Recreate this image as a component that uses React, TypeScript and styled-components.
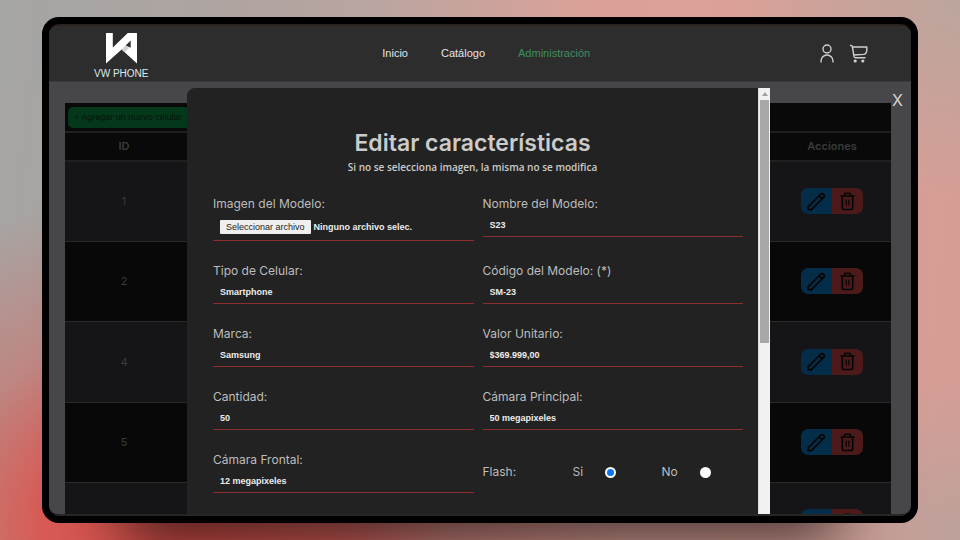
import React, { useState } from "react";
import styled, { createGlobalStyle } from "styled-components";

const geometric = `Inter, "Open Sans", sans-serif`;
const plain = `"Liberation Sans", Arial, sans-serif`;

const GlobalStyle = createGlobalStyle`
  *, *::before, *::after { box-sizing: border-box; }
  body { margin: 0; font-family: ${geometric}; }
  button, input { font: inherit; }
`;

const Backdrop = styled.div`
  display: flex;
  height: 100vh;
  padding: 17px 42px;
  overflow: hidden;
  background:
    radial-gradient(ellipse 440px 340px at 20% 98%, #dc4a44 0%, rgba(220, 84, 78, 0.9) 35%, rgba(212, 104, 98, 0.5) 60%, rgba(205, 140, 134, 0) 100%),
    radial-gradient(ellipse 240px 200px at 100% 0%, rgba(184, 166, 158, 0.9), rgba(200, 163, 155, 0) 100%),
    radial-gradient(ellipse 180px 160px at 100% 100%, rgba(186, 162, 156, 0.9), rgba(200, 163, 155, 0) 100%),
    linear-gradient(96deg, #a5a5a3 0%, #ada4a1 20%, #bba5a0 38%, #dba198 58%, #dca097 76%, #d49d95 100%);
`;

const Device = styled.div`
  display: flex;
  flex: 1;
  min-width: 0;
  border: 7px solid #000;
  border-radius: 17px;
  background: #000;
  box-shadow: 0 100px 60px -80px rgba(20, 18, 18, 0.75);
`;

const Screen = styled.div`
  display: flex;
  flex: 1;
  flex-direction: column;
  min-width: 0;
  overflow: hidden;
  border-top: 2px solid #2a221d;
  border-bottom: 2px solid #262626;
  border-radius: 10px;
  background: #47464a;
`;

const Header = styled.header`
  display: flex;
  flex: none;
  align-items: center;
  justify-content: space-between;
  height: 56px;
  padding: 0 43px 1px 45px;
  border-bottom: 1px solid #3a393b;
  background: #2d2d2d;
`;

const Brand = styled.a`
  display: flex;
  flex-direction: column;
  align-items: center;
  gap: 4px;
  padding-top: 6px;
  color: #dcebf0;
  font: 10px/12px ${plain};
  text-decoration: none;
  white-space: nowrap;
`;

const Nav = styled.nav`
  display: flex;
  gap: 33px;
  padding-left: 5px;
  font: 11px/16px ${plain};
`;

const NavLink = styled.a<{ $active?: boolean }>`
  color: ${(p) => (p.$active ? "#3f8f5f" : "#e4e4ea")};
  text-decoration: none;
`;

const HeaderIcons = styled.div`
  display: flex;
  gap: 14px;
`;

const IconButton = styled.button`
  display: flex;
  padding: 0;
  border: 0;
  background: none;
  color: #cfcfcf;
`;

const Main = styled.main`
  position: relative;
  flex: 1;
  min-height: 0;
  padding: 21px 20px 0 16px;
  overflow: hidden;
`;

const Toolbar = styled.div`
  display: flex;
  align-items: center;
  height: 30px;
  padding: 0 3px;
  border-bottom: 2px solid #1f1f20;
  background: #090909;
`;

const AddButton = styled.button`
  height: 21px;
  padding: 0 8px 0 6px;
  border: 0;
  border-radius: 5px;
  background: #04381b;
  color: #07120b;
  font: 9px/21px ${plain};
  white-space: nowrap;
`;

const Table = styled.table`
  width: 100%;
  border-collapse: separate;
  border-spacing: 0;
  table-layout: fixed;
  color: #3a3a3b;
`;

const HeadCell = styled.th`
  height: 29px;
  padding: 0 0 2px;
  border-bottom: 2px solid #1f1f20;
  background: #090909;
  font: 600 11px/16px ${geometric};
`;

const BodyRow = styled.tr`
  height: 80px;
  background: #151517;
  &:nth-child(even) { background: #080808; }
  &:nth-child(3n) { height: 81px; }
`;

const Cell = styled.td`
  padding: 0 0 1px;
  border-bottom: 1px solid #2a2a2b;
  text-align: center;
  font: 11px/16px ${geometric};
`;

const Actions = styled.div`
  display: inline-flex;
  overflow: hidden;
  border-radius: 7px;
  vertical-align: middle;
`;

const ActionButton = styled.button<{ $danger?: boolean }>`
  display: grid;
  place-items: center;
  width: 31px;
  height: 26px;
  padding: 0;
  border: 0;
  background: ${(p) => (p.$danger ? "#4c1b19" : "#032d49")};
  color: #050505;
`;

const Overlay = styled.div`
  position: absolute;
  inset: 0;
  display: flex;
  padding: 6px 141px 0 138px;
`;

const CloseButton = styled.button`
  position: absolute;
  top: 8px;
  right: 8px;
  padding: 0;
  border: 0;
  background: none;
  color: #d2d2d2;
  font: 16px/20px ${geometric};
`;

const Dialog = styled.section`
  display: flex;
  flex: 1;
  min-width: 0;
  overflow: hidden;
  border-radius: 8px 0 0 0;
  background: #222;
`;

const DialogBody = styled.div`
  flex: 1;
  min-width: 0;
  padding-top: 39px;
`;

const ScrollTrack = styled.div`
  display: flex;
  flex: none;
  flex-direction: column;
  align-items: center;
  width: 12px;
  border-left: 1px solid #dcdcdc;
  background: #f1f1f1;
`;

const ScrollArrow = styled.div`
  display: grid;
  place-items: center;
  height: 12px;
`;

const ScrollThumb = styled.div`
  width: 9px;
  height: 57%;
  background: #a8a8a8;
`;

const Title = styled.h1`
  margin: 0;
  color: #cbcbcb;
  font: 600 23px/32px ${geometric};
  text-align: center;
`;

const Note = styled.p`
  margin: 0 0 20px;
  color: #cbcbcb;
  font: 600 10px/16px "Open Sans", sans-serif;
  text-align: center;
`;

const Form = styled.form`
  display: grid;
  grid-template-columns: 1fr 1fr;
  gap: 21px 9px;
  padding: 0 15px 0 26px;
`;

const Field = styled.div`
  display: flex;
  flex-direction: column;
  align-self: start;
  min-width: 0;
`;

const labelText = `
  color: #bdbdbd;
  font: 12px/18px ${geometric};
`;

const FieldLabel = styled.label`
  ${labelText}
`;

const TextInput = styled.input`
  width: 100%;
  height: 24px;
  padding: 0 7px;
  border: 0;
  border-bottom: 1px solid #8f2e2e;
  border-radius: 0;
  outline: 0;
  background: transparent;
  color: #ececec;
  font: bold 9px/16px ${plain};
`;

const FileRow = styled.div`
  display: flex;
  align-items: center;
  gap: 3px;
  height: 28px;
  padding: 0 7px;
  border-bottom: 1px solid #8f2e2e;
  color: #ececec;
  font: bold 9px/14px ${plain};
  white-space: nowrap;
`;

const FileTrigger = styled.label`
  padding: 0 6px;
  border-radius: 1px;
  background: #efefef;
  color: #222;
  font: 9px/14px ${plain};
`;

const HiddenFile = styled.input`
  position: absolute;
  width: 1px;
  height: 1px;
  overflow: hidden;
  opacity: 0;
`;

const FlashGroup = styled.fieldset`
  display: grid;
  grid-template-columns: 90px 89px 1fr;
  align-items: center;
  min-width: 0;
  margin: 0;
  padding: 0;
  border: 0;
  ${labelText}
`;

const Option = styled.label`
  display: flex;
  align-items: center;
  gap: 22px;
`;

const Radio = styled.input`
  appearance: none;
  width: 11px;
  height: 11px;
  margin: 0;
  border: 2px solid #fff;
  border-radius: 50%;
  background: #fff;
  &:checked { background: #0a74f5; }
`;

const Logo = () => (
  <svg width="31" height="31" viewBox="0 0 31 31" aria-hidden="true">
    <path d="M0 0H6.8V14.6L21.8 0H31V30.6L15.6 16.4L0 30.6Z" fill="#fff" />
    <path d="M24.7 7.4V14.8L19.6 12.4Z" fill="#2d2d2d" />
    <path d="M15.6 16.4L19.8 12.3L23 15L18.8 19.3Z" fill="#d2d2d2" />
  </svg>
);

const UserIcon = () => (
  <svg width="17" height="19" viewBox="0 0 17 19" fill="none" stroke="currentColor" strokeWidth="1.4" aria-hidden="true">
    <circle cx="8" cy="5" r="4" />
    <path d="M2 18.4V17a6 6 0 0 1 12 0v1.4" />
  </svg>
);

const CartIcon = () => (
  <svg width="18" height="19" viewBox="0 0 18 19" fill="none" stroke="currentColor" strokeWidth="1.4" strokeLinejoin="round" aria-hidden="true">
    <path d="M0 1.2L2.300 2.200L4 12.400q.3 1.300 1.500 1.300H15.500M2.400 3H16.800V6.500q-.2 3.600-3.400 3.900L3.700 11" />
    <circle cx="5.200" cy="17" r="1.600" fill="currentColor" stroke="none" />
    <circle cx="12.800" cy="17" r="1.600" fill="currentColor" stroke="none" />
  </svg>
);

const PencilIcon = () => (
  <svg width="19" height="19" viewBox="0 0 19 19" fill="none" stroke="currentColor" strokeWidth="1.7" strokeLinejoin="round" aria-hidden="true">
    <path d="M1.300 17.700V14.600L13.800 2.100a1.800 1.800 0 0 1 2.600 0l.5.5a1.800 1.800 0 0 1 0 2.600L4.400 17.700ZM12.600 3.300q.2 2.800 3.100 3.100" />
  </svg>
);

const TrashIcon = () => (
  <svg width="15" height="19" viewBox="0 0 15 19" fill="none" stroke="currentColor" strokeWidth="1.6" strokeLinejoin="round" aria-hidden="true">
    <path d="M.5 4h14M2.300 4v12q0 1.500 1.400 1.500h7.600q1.400 0 1.400-1.500V4M4.500 4V2.200q0-1 1-1h4q1 0 1 1V4" />
    <path d="M6.200 7.500v6M8.800 7.500v6" strokeWidth="1.200" />
  </svg>
);

const phoneIds = ["1", "2", "4", "5", ""];

interface TextFieldProps {
  id: string;
  label: string;
  value: string;
}

const TextField = ({ id, label, value }: TextFieldProps) => (
  <Field>
    <FieldLabel htmlFor={id}>{label}</FieldLabel>
    <TextInput id={id} defaultValue={value} />
  </Field>
);

const EditForm = () => {
  const [flash, setFlash] = useState("si");
  return (
    <Form>
      <Field>
        <FieldLabel htmlFor="imagen">Imagen del Modelo:</FieldLabel>
        <FileRow>
          <HiddenFile id="imagen" type="file" />
          <FileTrigger htmlFor="imagen">Seleccionar archivo</FileTrigger>
          <span>Ninguno archivo selec.</span>
        </FileRow>
      </Field>
      <TextField id="nombre" label="Nombre del Modelo:" value="S23" />
      <TextField id="tipo" label="Tipo de Celular:" value="Smartphone" />
      <TextField id="codigo" label="Código del Modelo: (*)" value="SM-23" />
      <TextField id="marca" label="Marca:" value="Samsung" />
      <TextField id="valor" label="Valor Unitario:" value="$369.999,00" />
      <TextField id="cantidad" label="Cantidad:" value="50" />
      <TextField id="principal" label="Cámara Principal:" value="50 megapixeles" />
      <TextField id="frontal" label="Cámara Frontal:" value="12 megapixeles" />
      <FlashGroup>
        <span>Flash:</span>
        <Option>
          Si
          <Radio type="radio" name="flash" checked={flash === "si"} onChange={() => setFlash("si")} />
        </Option>
        <Option>
          No
          <Radio type="radio" name="flash" checked={flash === "no"} onChange={() => setFlash("no")} />
        </Option>
      </FlashGroup>
    </Form>
  );
};

export default function App() {
  return (
    <>
      <GlobalStyle />
      <Backdrop>
        <Device>
          <Screen>
            <Header>
              <Brand href="#">
                <Logo />
                VW PHONE
              </Brand>
              <Nav>
                <NavLink href="#">Inicio</NavLink>
                <NavLink href="#">Catálogo</NavLink>
                <NavLink href="#" $active>Administración</NavLink>
              </Nav>
              <HeaderIcons>
                <IconButton aria-label="Cuenta"><UserIcon /></IconButton>
                <IconButton aria-label="Carrito"><CartIcon /></IconButton>
              </HeaderIcons>
            </Header>
            <Main>
              <Toolbar>
                <AddButton>+ Agregar un nuevo celular</AddButton>
              </Toolbar>
              <Table>
                <colgroup>
                  <col span={7} />
                </colgroup>
                <thead>
                  <tr>
                    <HeadCell>ID</HeadCell>
                    <HeadCell colSpan={5} />
                    <HeadCell>Acciones</HeadCell>
                  </tr>
                </thead>
                <tbody>
                  {phoneIds.map((id, index) => (
                    <BodyRow key={index}>
                      <Cell>{id}</Cell>
                      <Cell colSpan={5} />
                      <Cell>
                        <Actions>
                          <ActionButton aria-label="Editar"><PencilIcon /></ActionButton>
                          <ActionButton $danger aria-label="Eliminar"><TrashIcon /></ActionButton>
                        </Actions>
                      </Cell>
                    </BodyRow>
                  ))}
                </tbody>
              </Table>
              <Overlay>
                <Dialog role="dialog" aria-labelledby="titulo">
                  <DialogBody>
                    <Title id="titulo">Editar características</Title>
                    <Note>Si no se selecciona imagen, la misma no se modifica</Note>
                    <EditForm />
                  </DialogBody>
                  <ScrollTrack>
                    <ScrollArrow>
                      <svg width="6" height="4" viewBox="0 0 6 4" aria-hidden="true">
                        <path d="M0 4L3 0L6 4Z" fill="#a0a0a0" />
                      </svg>
                    </ScrollArrow>
                    <ScrollThumb />
                  </ScrollTrack>
                </Dialog>
                <CloseButton aria-label="Cerrar">X</CloseButton>
              </Overlay>
            </Main>
          </Screen>
        </Device>
      </Backdrop>
    </>
  );
}
